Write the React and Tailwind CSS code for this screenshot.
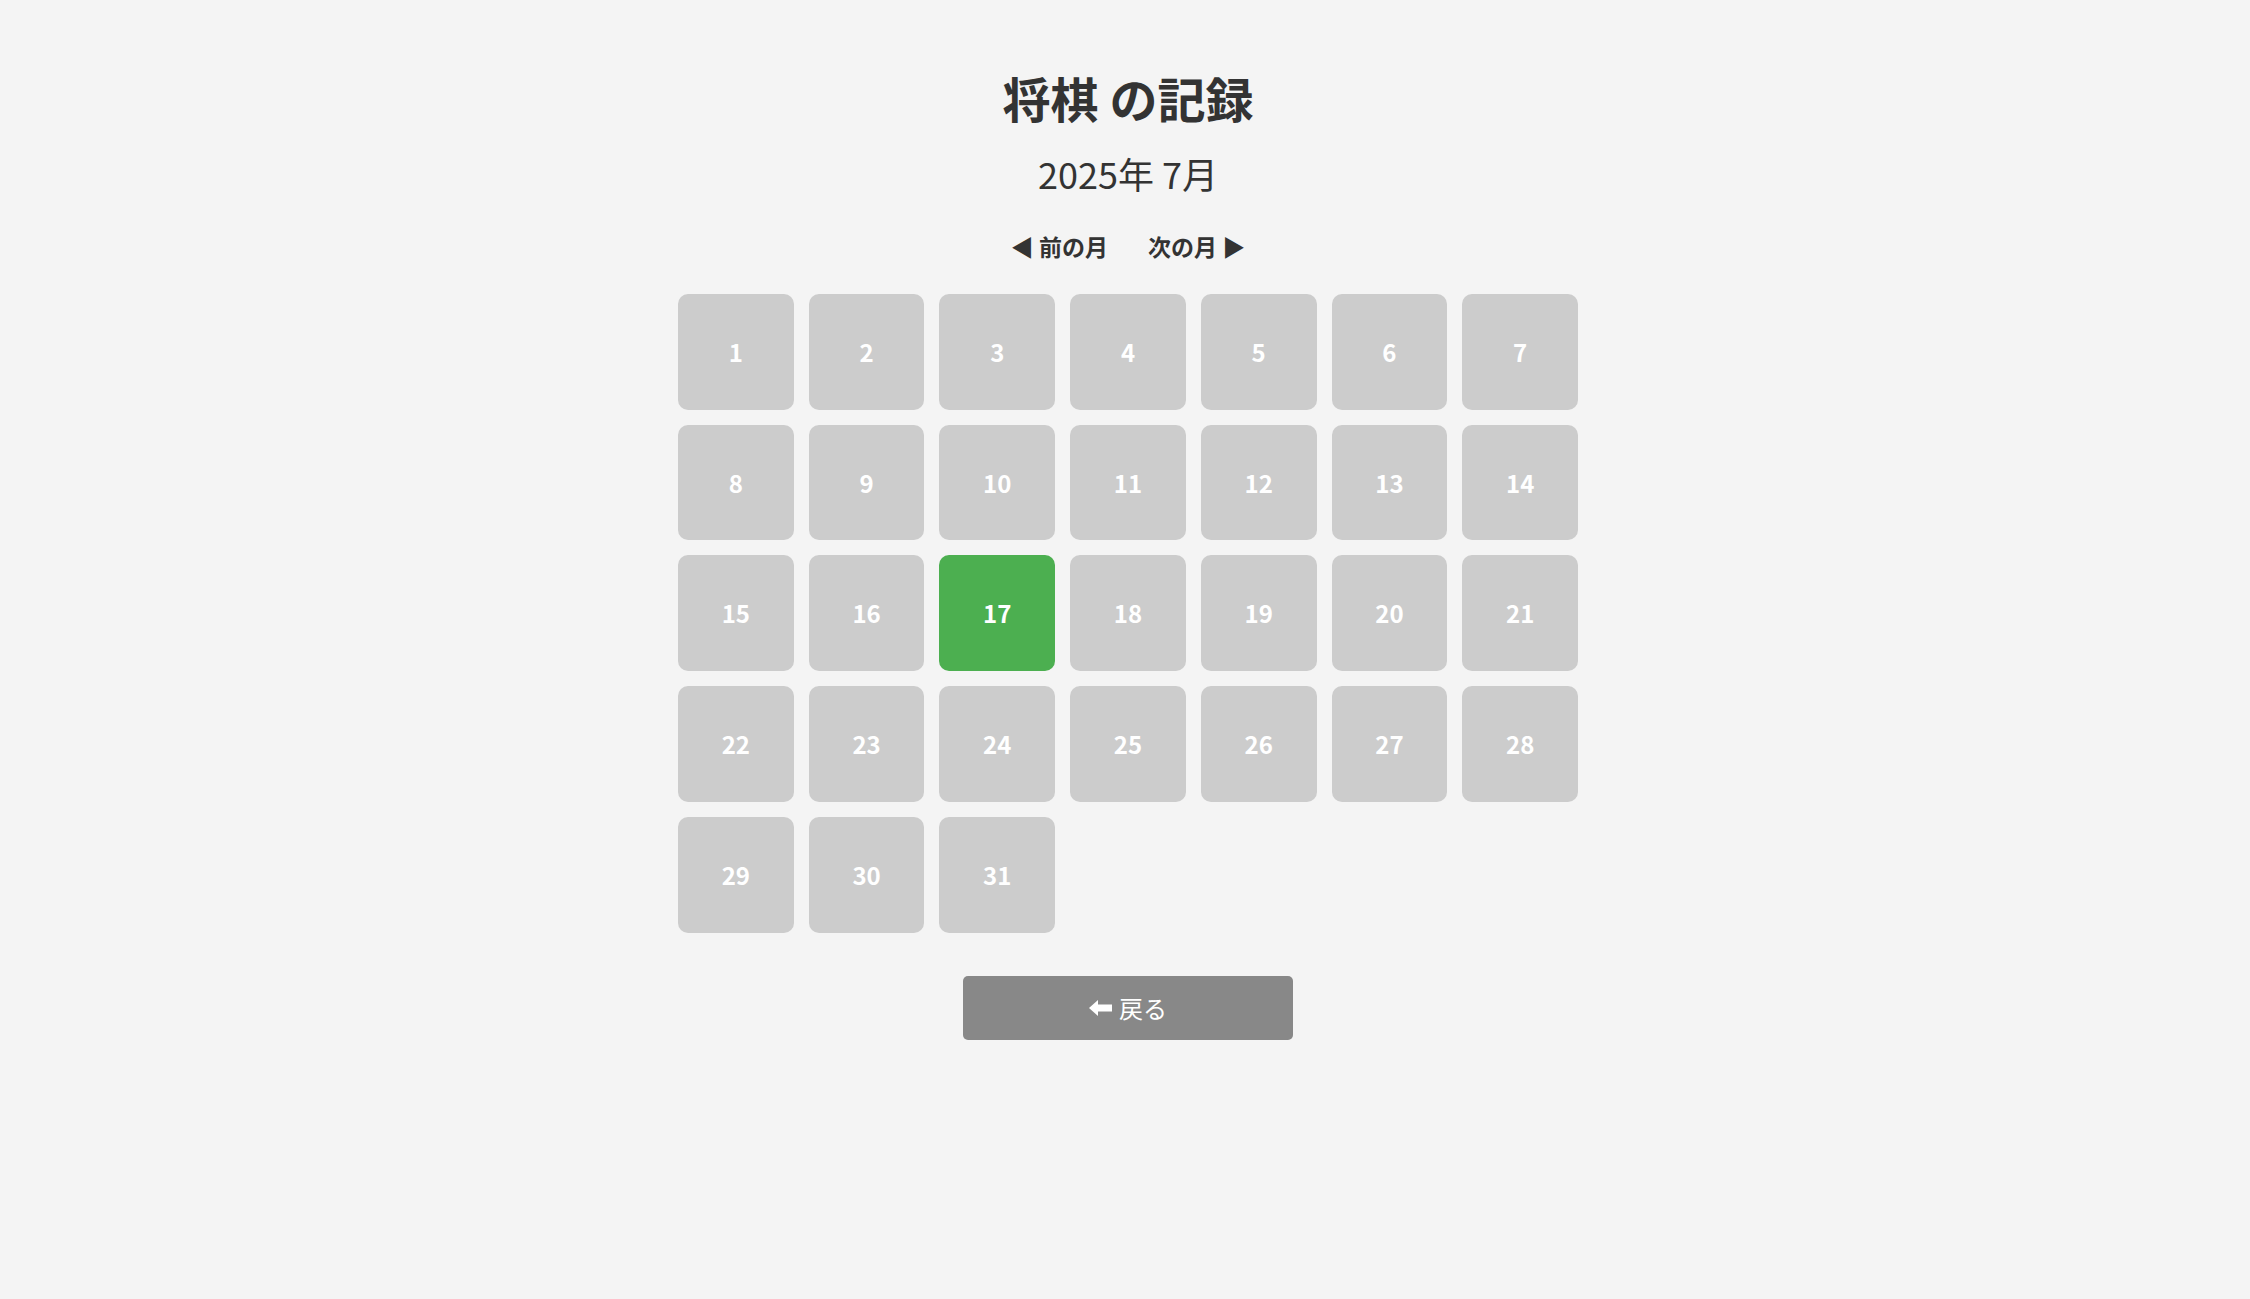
import React, { useState } from 'react';

const FONT = { fontFamily: '"Noto Sans CJK JP", "Noto Sans", sans-serif' };

const CalendarPage = () => {
  const [year] = useState(2025);
  const [month] = useState(7);
  const recorded = [17];
  const days = Array.from({ length: 31 }, (_, i) => i + 1);

  return (
    <div className="min-h-screen bg-[#f4f4f4] text-[#333]" style={FONT}>
      <div className="flex flex-col items-center pt-[68px] pl-[6px]">
        <h1 className="text-[48px] leading-[58px] font-bold">将棋 の記録</h1>
        <h2 className="mt-[25px] text-[36px] leading-[44px] font-normal">{year}年 {month}月</h2>

        {/* month navigation */}
        <div className="mt-[36px] flex items-center gap-[40px] text-[23px] leading-[30px] font-bold">
          <a className="cursor-pointer">◀ 前の月</a>
          <a className="cursor-pointer">次の月 ▶</a>
        </div>

        <div className="mt-[33px] grid w-[900px] grid-cols-7 gap-[15px]">
          {days.map((d) => (
            <div
              key={d}
              className={
                'flex aspect-square items-center justify-center rounded-[10px] text-[24px] font-bold text-white ' +
                (recorded.includes(d) ? 'bg-[#4caf50]' : 'bg-[#cccccc]')
              }
            >
              {d}
            </div>
          ))}
        </div>

        <button className="mt-[43px] flex h-[64px] w-[330px] items-center justify-center gap-[6px] rounded-[5px] bg-[#888888] text-[24px] text-white">
          <svg width="24" height="16" viewBox="0 0 24 16" fill="white">
            <path d="M0 8 L9 0 L9 4.5 L23 4.5 L23 11.5 L9 11.5 L9 16 Z" />
          </svg>
          <span>戻る</span>
        </button>
      </div>
    </div>
  );
};

export default function App() {
  return <CalendarPage />;
}
